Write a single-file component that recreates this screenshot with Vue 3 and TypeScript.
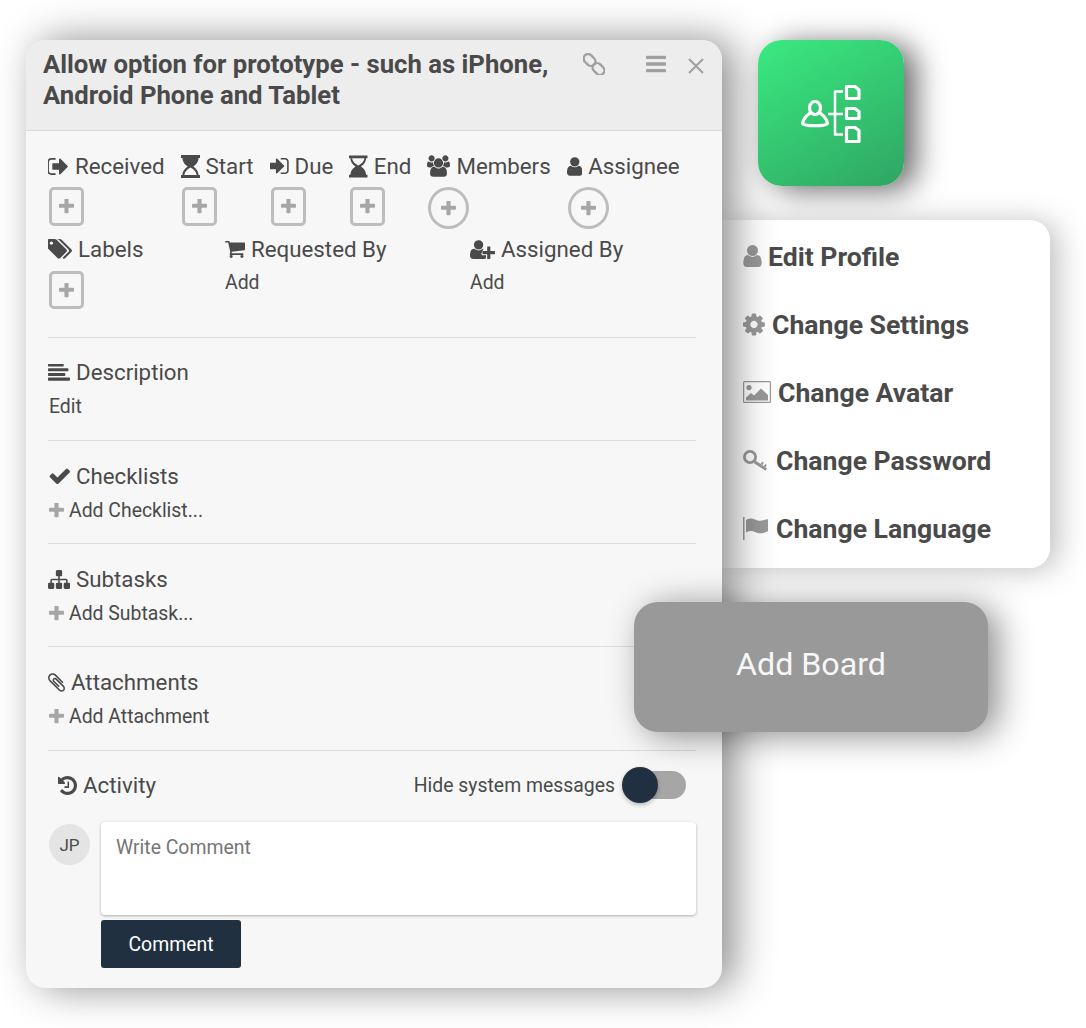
<template>
  <div class="desk">
    <!-- profile menu sits behind the card so the card shadow falls on it -->
    <div class="menu">
      <div v-for="m in menuItems" :key="m.label" class="menu-item">
        <Ic :name="m.icon" />
        <span>{{ m.label }}</span>
      </div>
    </div>

    <div class="card">
      <div class="card-head">
        <h2>Allow option for prototype - such as iPhone, Android Phone and Tablet</h2>
        <svg class="head-link" width="22" height="22" viewBox="0 0 22 22" fill="none" stroke="currentColor" stroke-width="2.4">
          <rect x="0" y="2.500" width="13" height="9" rx="4.500" transform="rotate(45 6.500 7)" />
          <rect x="9" y="11.500" width="13" height="9" rx="4.500" transform="rotate(45 15.500 16)" />
        </svg>
        <Ic class="head-bars" name="bars" />
        <svg class="head-close" width="16" height="16" viewBox="0 0 16 16" stroke="currentColor" stroke-width="2">
          <path d="M1 1l14 14M15 1L1 15" />
        </svg>
      </div>

      <div class="card-body">
        <div class="meta">
          <div class="meta-row">
            <div v-for="f in topFields" :key="f.label" class="field">
              <div class="label"><Ic :name="f.icon" /><span>{{ f.label }}</span></div>
              <div :class="['plus-btn', f.round ? 'round' : '']"><Ic name="plus" /></div>
            </div>
          </div>
          <div class="meta-row second">
            <div class="field">
              <div class="label"><Ic name="tags" /><span>Labels</span></div>
              <div class="plus-btn"><Ic name="plus" /></div>
            </div>
            <div class="field">
              <div class="label"><Ic name="cart" /><span>Requested By</span></div>
              <div class="add-text">Add</div>
            </div>
            <div class="field">
              <div class="label"><Ic name="userPlus" /><span>Assigned By</span></div>
              <div class="add-text">Add</div>
            </div>
          </div>
        </div>

        <div v-for="s in sections" :key="s.title" class="section">
          <div class="label"><Ic :name="s.icon" /><span>{{ s.title }}</span></div>
          <div class="sub">
            <Ic v-if="s.add" class="sub-plus" name="plus" />
            <span>{{ s.action }}</span>
          </div>
        </div>

        <div class="activity">
          <div class="activity-top">
            <div class="label"><Ic name="history" /><span>Activity</span></div>
            <div class="hide-msg">
              <span>Hide system messages</span>
              <div class="toggle"><div class="knob"></div></div>
            </div>
          </div>
          <div class="comment">
            <div class="avatar">JP</div>
            <div class="comment-main">
              <div class="comment-box">Write Comment</div>
              <button class="comment-btn">Comment</button>
            </div>
          </div>
        </div>
      </div>
    </div>

    <div class="tile">
      <svg width="62" height="60" viewBox="800 83 62 60" fill="none" stroke="#fff" stroke-width="3.2" stroke-linejoin="round">
        <ellipse cx="815" cy="108" rx="5.500" ry="6.500" />
        <path d="M810 113C806 116 803 120 802.500 123.500C804 126.500 826 126.500 827.500 123.500C827 120 824 116 820 113" />
        <path d="M828 114H843M843 91.500H835V134.500H843" stroke-width="2.500" />
        <path d="M846.500 86.500H855L859 90V98.500H846.500Z" />
        <path d="M846.500 108.500H855L859 111.500V118.500H846.500Z" />
        <path d="M846.500 127.500H855L859 130.500V141.500H846.500Z" />
      </svg>
    </div>

    <div class="add-board">Add Board</div>
  </div>
</template>

<script setup lang="ts">
import { h } from "vue";

type IconDef = { vb: string; w: number; h: number; d: string };

const hourglass = "M0 0h20v3h-1.600c0 4.500-2.800 7-5.400 9c2.600 2 5.400 4.500 5.400 9H20v3H0v-3h1.600c0-4.500 2.800-7 5.400-9c-2.600-2-5.400-4.500-5.400-9H0z";
const userPath = "M1536 1399q0 109-62.5 187t-150.5 78h-854q-88 0-150.5-78t-62.5-187q0-85 8.5-160.5t31.5-152 58.5-131 94-89 134.5-34.5q131 128 313 128t313-128q76 0 134.5 34.5t94 89 58.5 131 31.5 152 8.5 160.5zm-256-887q0 159-112.5 271.5t-271.5 112.5-271.5-112.5-112.5-271.5 112.5-271.5 271.5-112.5 271.5 112.5 112.5 271.5z";

const icons: Record<string, IconDef> = {
  signOut: { vb: "120 256 1600 1280", w: 21, h: 17, d: "M704 1440q0 4 1 20t.5 26.5-3 23.5-10 19.5-20.5 6.5h-320q-119 0-203.5-84.5t-84.5-203.5v-704q0-119 84.5-203.5t203.5-84.5h320q13 0 22.5 9.5t9.5 22.5q0 4 1 20t.5 26.5-3 23.5-10 19.5-20.5 6.5h-320q-66 0-113 47t-47 113v704q0 66 47 113t113 47h312l11.5 1 11.5 3 8 5.5 7 9 2 13.5zm928-544q0 26-19 45l-544 544q-19 19-45 19t-45-19-19-45v-288h-448q-26 0-45-19t-19-45v-384q0-26 19-45t45-19h448v-288q0-26 19-45t45-19 45 19l544 544q19 19 19 45z" },
  signIn: { vb: "64 256 1472 1280", w: 19, h: 16, d: "M1184 896q0 26-19 45l-544 544q-19 19-45 19t-45-19-19-45v-288h-448q-26 0-45-19t-19-45v-384q0-26 19-45t45-19h448v-288q0-26 19-45t45-19 45 19l544 544q19 19 19 45zm352-352v704q0 119-84.5 203.5t-203.5 84.5h-320q-13 0-22.5-9.5t-9.5-22.5q0-4-1-20t-.5-26.5 3-23.5 10-19.5 20.5-6.5h320q66 0 113-47t47-113v-704q0-66-47-113t-113-47h-312l-11.5-1-11.5-3-8-5.5-7-9-2-13.5q0-4-1-20t-.5-26.5 3-23.5 10-19.5 20.5-6.5h320q119 0 203.5 84.5t84.5 203.5z" },
  hourStart: { vb: "0 0 20 24", w: 19, h: 23, d: hourglass + "M10 13.100c-3 1.800-6 4-6.600 7.900h13.200c-.6-3.900-3.600-6.100-6.600-7.900z" },
  hourEnd: { vb: "0 0 20 24", w: 18.500, h: 23, d: hourglass + "M3.300 3c.6 3.900 3.700 6.100 6.700 7.900c3-1.800 6.100-4 6.700-7.900z" },
  users: { vb: "0 0 1920 1792", w: 23, h: 22, d: "M593 896q-162 5-265 128h-134q-82 0-138-40.5t-56-118.5q0-353 124-353 6 0 43.5 21t97.5 42.5 119 21.5q67 0 133-23-5 37-5 66 0 139 81 256zm1071 637q0 120-73 189.5t-194 69.5h-874q-121 0-194-69.5t-73-189.5q0-53 3.5-103.5t14-109 26.5-108.5 43-97.5 62-81 85.5-53.5 111.5-20q10 0 43 21.5t73 48 107 48 135 21.5 135-21.5 107-48 73-48 43-21.5q61 0 111.5 20t85.5 53.5 62 81 43 97.5 26.5 108.5 14 109 3.5 103.5zm-1024-1277q0 106-75 181t-181 75-181-75-75-181 75-181 181-75 181 75 75 181zm704 384q0 159-112.5 271.5t-271.5 112.5-271.5-112.5-112.5-271.5 112.5-271.5 271.5-112.5 271.5 112.5 112.5 271.5zm576 225q0 78-56 118.5t-138 40.5h-134q-103-123-265-128 81-117 81-256 0-29-5-66 66 23 133 23 59 0 119-21.5t97.5-42.5 43.5-21q124 0 124 353zm-128-609q0 106-75 181t-181 75-181-75-75-181 75-181 181-75 181 75 75 181z" },
  user: { vb: "256 128 1280 1536", w: 15.500, h: 19, d: userPath },
  menuUser: { vb: "256 128 1280 1536", w: 19, h: 22, d: userPath },
  tags: { vb: "0 128 1835 1536", w: 24, h: 20, d: "M384 448q0-53-37.5-90.5t-90.5-37.5-90.5 37.5-37.5 90.5 37.5 90.5 90.5 37.5 90.5-37.5 37.5-90.5zm1067 576q0 53-37 90l-491 492q-39 37-91 37-53 0-90-37l-715-716q-38-37-64.5-101t-26.5-117v-416q0-52 38-90t90-38h416q53 0 117 26.5t102 64.5l715 714q37 39 37 91zm384 0q0 53-37 90l-491 492q-39 37-91 37-36 0-59-14t-53-45l470-470q37-37 37-90 0-52-37-91l-715-714q-38-38-102-64.5t-117-26.5h224q53 0 117 26.5t102 64.5l715 714q37 39 37 91z" },
  cart: { vb: "64 256 1664 1408", w: 20, h: 17, d: "M704 1536q0 52-38 90t-90 38-90-38-38-90 38-90 90-38 90 38 38 90zm896 0q0 52-38 90t-90 38-90-38-38-90 38-90 90-38 90 38 38 90zm128-1088v512q0 24-16.5 42.5t-40.5 21.5l-1044 122q13 60 13 70 0 16-24 64h920q26 0 45 19t19 45-19 45-45 19h-1024q-26 0-45-19t-19-45q0-11 8-31.5t16-36 21.5-40 15.5-29.5l-177-823h-204q-26 0-45-19t-19-45 19-45 45-19h256q16 0 28.5 6.5t19.5 15.5 13 24.5 8 26 5.5 29.5 4.5 26h1201q26 0 45 19t19 45z" },
  userPlus: { vb: "0 128 2048 1536", w: 25, h: 19, d: "M704 896q-159 0-271.5-112.5t-112.5-271.5 112.5-271.5 271.5-112.5 271.5 112.5 112.5 271.5-112.5 271.5-271.5 112.5zm960 128h352q13 0 22.5 9.5t9.5 22.5v192q0 13-9.5 22.5t-22.5 9.5h-352v352q0 13-9.5 22.5t-22.5 9.5h-192q-13 0-22.5-9.5t-9.5-22.5v-352h-352q-13 0-22.5-9.5t-9.5-22.5v-192q0-13 9.5-22.5t22.5-9.5h352v-352q0-13 9.5-22.5t22.5-9.5h192q13 0 22.5 9.5t9.5 22.5v352zm-736 224q0 52 38 90t90 38h256v238q-68 50-171 50h-874q-121 0-194-69t-73-190q0-53 3.5-103.5t14-109 26.5-108.5 43-97.5 62-81 85.5-53.5 111.5-20q19 0 39 17 154 122 319 122t319-122q20-17 39-17 28 0 57 6-28 27-41 50t-13 56z" },
  align: { vb: "0 192 1792 1344", w: 22, h: 17, d: "M1792 1344v128q0 26-19 45t-45 19h-1664q-26 0-45-19t-19-45v-128q0-26 19-45t45-19h1664q26 0 45 19t19 45zm-384-384v128q0 26-19 45t-45 19h-1280q-26 0-45-19t-19-45v-128q0-26 19-45t45-19h1280q26 0 45 19t19 45zm256-384v128q0 26-19 45t-45 19h-1536q-26 0-45-19t-19-45v-128q0-26 19-45t45-19h1536q26 0 45 19t19 45zm-384-384v128q0 26-19 45t-45 19h-1152q-26 0-45-19t-19-45v-128q0-26 19-45t45-19h1152q26 0 45 19t19 45z" },
  check: { vb: "0 302 1671 1188", w: 22, h: 16, d: "M1671 566q0 40-28 68l-724 724-136 136q-28 28-68 28t-68-28l-136-136-362-362q-28-28-28-68t28-68l136-136q28-28 68-28t68 28l294 295 656-657q28-28 68-28t68 28l136 136q28 28 28 68z" },
  sitemap: { vb: "0 128 1792 1536", w: 22, h: 19, d: "M1792 1248v320q0 40-28 68t-68 28h-320q-40 0-68-28t-28-68v-320q0-40 28-68t68-28h96v-192h-512v192h96q40 0 68 28t28 68v320q0 40-28 68t-68 28h-320q-40 0-68-28t-28-68v-320q0-40 28-68t68-28h96v-192h-512v192h96q40 0 68 28t28 68v320q0 40-28 68t-68 28h-320q-40 0-68-28t-28-68v-320q0-40 28-68t68-28h96v-192q0-52 38-90t90-38h512v-192h-96q-40 0-68-28t-28-68v-320q0-40 28-68t68-28h320q40 0 68 28t28 68v320q0 40-28 68t-68 28h-96v192h512q52 0 90 38t38 90v192h96q40 0 68 28t28 68z" },
  clip: { vb: "196 128 1400 1532", w: 17, h: 19, d: "M1596 1385q0 117-79 196t-196 79q-135 0-235-100l-777-776q-113-115-113-271 0-159 110-270t269-111q158 0 273 113l605 606q10 10 10 22 0 16-30.5 46.5t-46.5 30.5q-13 0-23-10l-606-607q-79-77-181-77-106 0-179 75t-73 181q0 105 76 181l776 777q63 63 145 63 64 0 106-42t42-106q0-82-63-145l-581-581q-26-24-60-24-29 0-48 19t-19 48q0 32 25 59l410 410q10 10 10 22 0 16-31 47t-47 31q-12 0-22-10l-410-410q-63-61-63-149 0-82 57-139t139-57q88 0 149 63l581 581q100 98 100 235z" },
  history: { vb: "128 128 1536 1536", w: 19, h: 19, d: "M1664 896q0 156-61 298t-164 245-245 164-298 61q-172 0-327-72.5t-264-204.5q-7-10-6.5-22.5t8.5-20.5l137-138q10-9 25-9 16 2 23 12 73 95 179 147t225 52q104 0 198.5-40.5t163.5-109.5 109.5-163.5 40.5-198.5-40.5-198.5-109.5-163.5-163.5-109.5-198.5-40.5q-98 0-188 35.5t-160 101.5l137 138q31 30 14 69-17 40-59 40h-448q-26 0-45-19t-19-45v-448q0-42 40-59 39-17 69 14l130 129q107-101 244.5-156.5t284.5-55.5q156 0 298 61t245 164 164 245 61 298zm-640-288v448q0 14-9 23t-23 9h-320q-14 0-23-9t-9-23v-64q0-14 9-23t23-9h224v-352q0-14 9-23t23-9h64q14 0 23 9t9 23z" },
  plus: { vb: "192 192 1408 1408", w: 15, h: 15, d: "M1600 736v192q0 40-28 68t-68 28h-416v416q0 40-28 68t-68 28h-192q-40 0-68-28t-28-68v-416h-416q-40 0-68-28t-28-68v-192q0-40 28-68t68-28h416v-416q0-40 28-68t68-28h192q40 0 68 28t28 68v416h416q40 0 68 28t28 68z" },
  bars: { vb: "128 256 1536 1280", w: 20, h: 18, d: "M1664 1344v128q0 26-19 45t-45 19h-1408q-26 0-45-19t-19-45v-128q0-26 19-45t45-19h1408q26 0 45 19t19 45zm0-512v128q0 26-19 45t-45 19h-1408q-26 0-45-19t-19-45v-128q0-26 19-45t45-19h1408q26 0 45 19t19 45zm0-512v128q0 26-19 45t-45 19h-1408q-26 0-45-19t-19-45v-128q0-26 19-45t45-19h1408q26 0 45 19t19 45z" },
  cog: { vb: "128 128 1616 1536", w: 23, h: 23, d: "M1152 896q0-106-75-181t-181-75-181 75-75 181 75 181 181 75 181-75 75-181zm512-109v222q0 12-8 23t-20 13l-185 28q-19 54-39 91 35 50 107 138 10 12 10 25t-9 23q-27 37-99 108t-94 71q-12 0-26-9l-138-108q-44 23-91 38-16 136-29 186-7 28-36 28h-222q-14 0-24.5-8.5t-11.5-21.5l-28-184q-49-16-90-37l-141 107q-10 9-25 9-14 0-25-11-126-114-165-168-7-10-7-23 0-12 8-23 15-21 51-66.5t54-70.5q-27-50-41-99l-183-27q-13-2-21-12.5t-8-23.5v-222q0-12 8-23t19-13l186-28q14-46 39-92-40-57-107-138-10-12-10-24 0-10 9-23 26-36 98.5-107.5t94.5-71.5q13 0 26 10l138 107q44-23 91-38 16-136 29-186 7-28 36-28h222q14 0 24.5 8.5t11.5 21.5l28 184q49 16 90 37l142-107q9-9 24-9 13 0 25 10 129 119 165 170 7 8 7 22 0 12-8 23-15 21-51 66.5t-54 70.5q26 50 41 98l183 28q13 2 21 12.5t8 23.5z" },
  // outlined picture frame with a hill and sun
  picture: { vb: "0 0 29 22", w: 29, h: 22, d: "M1.500 0h25A1.500 1.500 0 0 1 28 1.500v19a1.500 1.500 0 0 1-1.500 1.500h-25A1.500 1.500 0 0 1 0 20.500v-19A1.500 1.500 0 0 1 1.500 0zM1.500 1.200a.3.3 0 0 0-.3.3v19a.3.3 0 0 0 .3.3h25a.3.3 0 0 0 .3-.3v-19a.3.3 0 0 0-.3-.3zM6 4a2.600 2.600 0 1 1 0 5.200A2.600 2.600 0 0 1 6 4zM3 19.500v-3l5-4.500 3 2.500 7-7 7 6.500v5.500z" },
  // key with round outlined bow, pointing lower right
  key: { vb: "0 0 27 21", w: 27, h: 21, d: "M7 0a7 7 0 1 1 0 14a7 7 0 0 1 0-14zM7 2.800a4.200 4.200 0 1 0 0 8.400a4.200 4.200 0 0 0 0-8.400zM12.800 10.800L24 18.300 22.500 20.700 11 13.200zM17.600 14l1.800-2.400 1.400 1.100-1.600 2.700zM20.800 16.100l1.600-2.100 1.400 1.100-1.400 2.400z" },
  // pole with a waving flag
  flag: { vb: "0 0 27 23", w: 27, h: 23, d: "M0 0h1.500v23H0zM3 3c3-2 6-2 9-.5s6 2 10 .2c1-.4 3-.8 3 0v11c0 .7-2 1.300-3 1.700-4 1.600-7 1-10-.4s-6-1.200-9 .5z" },
};

// small svg helper so the template stays readable
const Ic = (props: { name: string }) => {
  const i = icons[props.name];
  return h("svg", { viewBox: i.vb, width: i.w, height: i.h, fill: "currentColor", class: "ic" }, [h("path", { d: i.d, "fill-rule": "evenodd" })]);
};
Ic.props = ["name"];

const topFields = [
  { label: "Received", icon: "signOut" },
  { label: "Start", icon: "hourStart" },
  { label: "Due", icon: "signIn" },
  { label: "End", icon: "hourEnd" },
  { label: "Members", icon: "users", round: true },
  { label: "Assignee", icon: "user", round: true },
];

const sections = [
  { title: "Description", icon: "align", action: "Edit", add: false },
  { title: "Checklists", icon: "check", action: "Add Checklist...", add: true },
  { title: "Subtasks", icon: "sitemap", action: "Add Subtask...", add: true },
  { title: "Attachments", icon: "clip", action: "Add Attachment", add: true },
];

const menuItems = [
  { label: "Edit Profile", icon: "menuUser" },
  { label: "Change Settings", icon: "cog" },
  { label: "Change Avatar", icon: "picture" },
  { label: "Change Password", icon: "key" },
  { label: "Change Language", icon: "flag" },
];
</script>

<style scoped>
.desk {
  position: relative;
  width: 1086px;
  height: 1028px;
  overflow: hidden;
  background: #fff;
  font-family: Roboto, "Liberation Sans", sans-serif;
  color: #4a4a4a;
}

.card {
  position: absolute;
  left: 26px;
  top: 40px;
  width: 696px;
  height: 948px;
  border-radius: 20px;
  background: #f7f7f7;
  box-shadow: 12px 0 40px rgba(0, 0, 0, 0.45);
  overflow: hidden;
}

.card-head {
  box-sizing: border-box;
  display: flex;
  align-items: flex-start;
  height: 91px;
  padding: 9px 0 0 17px;
  background: #ededed;
  border-bottom: 1px solid #d8d8d8;
  color: #a0a0a0;
}

.card-head h2 {
  width: 520px;
  margin: 0;
  font-size: 25.700px;
  line-height: 31px;
  font-weight: 700;
  color: #4a4a4a;
}

.head-link {
  margin: 4px 0 0 20px;
}

.head-bars {
  margin: 6px 0 0 41px;
}

.head-close {
  margin: 9px 0 0 22px;
}

.card-body {
  padding: 20px 26px 0 22px;
}

.meta {
  height: 186px;
  border-bottom: 1px solid #ddd;
}

.meta-row {
  display: flex;
  gap: 16px;
}

.meta-row.second {
  display: grid;
  grid-template-columns: 177px 245px auto;
  gap: 0;
  margin-top: 5px;
}

.field {
  display: flex;
  flex-direction: column;
  align-items: flex-start;
  gap: 6px;
}

.second .field {
  gap: 7px;
}

.label {
  display: flex;
  align-items: center;
  gap: 6px;
  height: 30px;
  font-size: 22.300px;
  white-space: nowrap;
}

.plus-btn {
  display: flex;
  align-items: center;
  justify-content: center;
  box-sizing: border-box;
  width: 35px;
  height: 39px;
  margin-left: 1px;
  border: 3px solid #bdbdbd;
  border-radius: 5px;
  color: #a6a6a6;
}

.second .plus-btn {
  height: 38px;
}

.plus-btn.round {
  width: 41px;
  height: 42px;
  border-radius: 50%;
}

.add-text {
  height: 24px;
  font-size: 19.400px;
  line-height: 24px;
}

.section {
  box-sizing: border-box;
  height: 103px;
  padding-top: 20px;
  border-bottom: 1px solid #ddd;
}

.section:nth-child(2) {
  padding-top: 19px;
}

.section:nth-child(5) {
  height: 104px;
}

.sub {
  display: flex;
  align-items: center;
  gap: 5px;
  height: 24px;
  margin-top: 7px;
  margin-left: 1px;
  font-size: 19.400px;
}

.sub-plus {
  color: #a6a6a6;
}

.activity {
  padding-top: 16px;
}

.activity-top {
  display: flex;
  align-items: center;
  justify-content: space-between;
  padding: 0 10px;
  height: 36px;
}

.hide-msg {
  display: flex;
  align-items: center;
  gap: 7px;
  font-size: 19.400px;
}

.toggle {
  position: relative;
  width: 64px;
  height: 28px;
  border-radius: 14px;
  background: linear-gradient(to right, transparent 10px, #a6a6a6 10px);
}

.knob {
  position: absolute;
  left: 0;
  top: -4px;
  width: 36px;
  height: 36px;
  border-radius: 50%;
  background: #203040;
  box-shadow: 0 2px 4px rgba(0, 0, 0, 0.25);
}

.comment {
  display: flex;
  gap: 11px;
  margin-top: 19px;
}

.avatar {
  display: flex;
  align-items: center;
  justify-content: center;
  width: 41px;
  height: 41px;
  margin: 2px 0 0 1px;
  flex-shrink: 0;
  border-radius: 50%;
  background: #e4e4e4;
  font-size: 17px;
}

.comment-main {
  flex: 1;
}

.comment-box {
  box-sizing: border-box;
  height: 93px;
  padding: 14px 15px;
  border-radius: 4px;
  background: #fff;
  box-shadow: 0 1px 3px rgba(0, 0, 0, 0.3);
  font-size: 19.400px;
  line-height: 24px;
  color: #757575;
}

.comment-btn {
  display: block;
  width: 140px;
  height: 48px;
  margin-top: 5px;
  border: none;
  border-radius: 3px;
  background: #203040;
  color: #fff;
  font-family: inherit;
  font-size: 19.400px;
  font-weight: 400;
}

.menu {
  position: absolute;
  left: 722px;
  top: 220px;
  box-sizing: border-box;
  width: 328px;
  height: 348px;
  padding: 2px 0 0 21px;
  border-radius: 0 20px 20px 0;
  background: #fff;
  box-shadow: 8px 2px 30px rgba(0, 0, 0, 0.25);
}

.menu-item {
  display: flex;
  align-items: center;
  gap: 6px;
  height: 68px;
  font-size: 26.600px;
  font-weight: 700;
  white-space: nowrap;
  color: #4a4a4a;
}

.menu-item .ic {
  color: #999;
}

.tile {
  position: absolute;
  left: 758px;
  top: 40px;
  display: flex;
  align-items: center;
  justify-content: center;
  width: 146px;
  height: 146px;
  border-radius: 24px;
  background: linear-gradient(150deg, #3aea80, #2fa563);
  box-shadow: 12px 4px 30px rgba(0, 0, 0, 0.6);
}

.add-board {
  position: absolute;
  left: 634px;
  top: 602px;
  box-sizing: border-box;
  display: flex;
  align-items: center;
  justify-content: center;
  width: 354px;
  height: 130px;
  padding-bottom: 6px;
  border-radius: 24px;
  background: #999;
  box-shadow: 10px 4px 34px rgba(0, 0, 0, 0.45);
  font-size: 32.200px;
  color: #f7f7f7;
}
</style>
